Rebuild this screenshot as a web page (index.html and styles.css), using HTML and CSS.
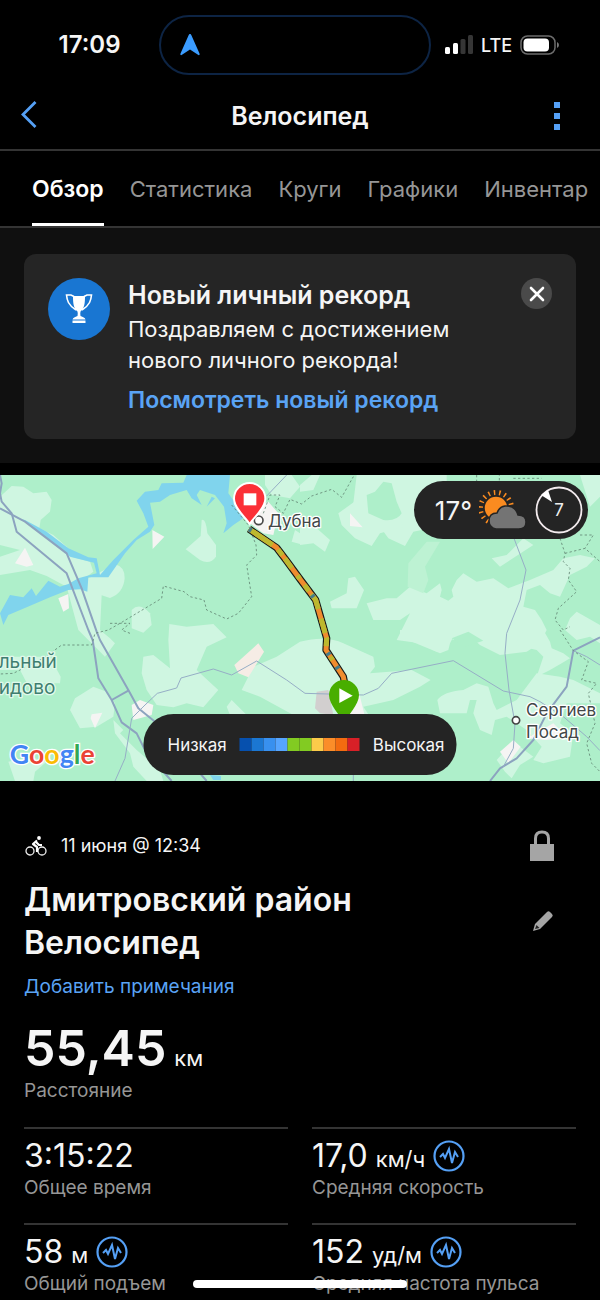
FILE: index.html
```html
<!DOCTYPE html>
<html lang="ru">
<head>
<meta charset="utf-8">
<meta name="viewport" content="width=device-width, initial-scale=1">
<title>Велосипед</title>
<link rel="stylesheet" href="styles.css">
</head>
<body>
<div class="status">
  <span class="clock">17:09</span>
  <div class="island">
    <svg width="20" height="22" viewBox="0 0 20 22"><path d="M10 0C10.800 0 11.200 .6 11.500 1.500L19.500 19.500C20 21 19 21.600 18 20.800L10 15.500L2 20.800C1 21.600 0 21 .5 19.500L8.500 1.500C8.800 .6 9.200 0 10 0Z" fill="#3b9cff"/></svg>
  </div>
  <div class="signals">
    <svg width="28" height="20" viewBox="0 0 28 20"><g fill="#fff"><rect y="12" width="5" height="7" rx="1.500"/><rect x="8" y="8" width="5" height="11" rx="1.500"/></g><g fill="#363636"><rect x="15.500" y="4" width="5" height="15" rx="1.500"/><rect x="23" y="0" width="5" height="19" rx="1.500"/></g></svg>
    <span class="network">LTE</span>
    <svg width="40" height="20" viewBox="0 0 40 20"><rect x="1" y="1" width="34" height="18" rx="6.500" fill="none" stroke="#6c6c6c" stroke-width="1.500"/><rect x="3.500" y="3.500" width="25.500" height="13" rx="4" fill="#fff"/><path d="M37 7Q39 8 39 10T37 13Z" fill="#777"/></svg>
  </div>
</div>

<header class="header">
  <button class="icon-button" aria-label="Назад"><svg width="18" height="30" viewBox="0 0 18 30"><path d="M15.500 1L3 13.500L15.500 26" fill="none" stroke="#55a0f5" stroke-width="2.800"/></svg></button>
  <h1 class="header-title">Велосипед</h1>
  <button class="icon-button icon-button-end" aria-label="Меню"><svg width="6" height="28" viewBox="0 0 6 28" fill="#55a0f5"><path d="M0 0h6v6H0zM0 11h6v6H0zM0 22h6v6H0z"/></svg></button>
</header>

<nav class="tabs">
  <a class="tab tab-active" href="#overview">Обзор</a>
  <a class="tab" href="#stats">Статистика</a>
  <a class="tab" href="#laps">Круги</a>
  <a class="tab" href="#charts">Графики</a>
  <a class="tab" href="#gear">Инвентар</a>
</nav>

<section class="notice">
  <div class="card">
    <div class="badge"><svg width="32" height="34" viewBox="0 0 32 34"><g fill="none" stroke="#fff" stroke-width="1.600"><path d="M11 4.500L8 3H3.500C4 8 5 13 13 18M21 4.500L24 3h4.500C28 8 27 13 19 18"/></g><path d="M10 4H22C22 11 21.500 16.500 17.500 19.500Q17 21 17.500 24C20 25 22 25.500 22.500 27.500H9.500C10 25.500 12 25 14.500 24Q15 21 14.500 19.500C10.500 16.500 10 11 10 4Z" fill="#fff"/><path d="M9.500 28.500h13v2.500h-13z" fill="#fff"/></svg></div>
    <div class="card-body">
      <h2 class="card-title">Новый личный рекорд</h2>
      <p class="card-text">Поздравляем с достижением нового личного рекорда!</p>
      <a class="card-link" href="#record">Посмотреть новый рекорд</a>
    </div>
    <button class="close" aria-label="Закрыть"><svg width="16" height="16" viewBox="0 0 16 16"><path d="M2 2L14 14M14 2L2 14" stroke="#fff" stroke-width="2.600" stroke-linecap="round"/></svg></button>
  </div>
</section>

<section class="map">
  <svg class="map-art" viewBox="0 15 1800 918" preserveAspectRatio="xMidYMid slice">
    <rect y="15" width="1800" height="918" fill="#aeefca"/>
    <g fill="#cff6e1">
      <path d="M0 80L35 48L70 50L100 70L140 65L155 90L150 125L122 150L118 175L160 195L200 230L215 260L270 275L280 305L220 350L190 345L140 318L90 300L0 315V260L60 240L0 225Z"/>
      <path d="M605 150Q618 145 622 190L648 225V260Q630 285 600 270L557 238L602 198Z"/>
      <path d="M272 322L345 283Q375 290 374 325Q370 370 330 384L305 376L300 480L330 505L345 520L315 560L235 480L200 350Z"/>
      <path d="M395 420Q420 395 450 430L455 465L430 488L395 475Z"/>
      <path d="M508 462L560 470L640 462L680 502L620 530L590 600L655 660L610 712L560 700L520 712L470 705L440 660L425 610L430 560L460 555L510 595L505 510Z"/>
      <path d="M795 15H875L900 50L870 85L815 75L795 45ZM885 180L900 190V222L875 215Z"/>
      <path d="M0 560L150 560L182 620L180 640L80 638L60 600L0 600ZM210 720L225 685L280 650L320 665L345 700L340 740L290 770L240 775Z"/>
      <path d="M25 875L90 860L140 875L105 905L100 933H45ZM340 750L370 780L360 790L410 840L480 900L490 933H440L400 890L390 850L345 790Z"/>
      <path d="M725 660L760 590L830 560L900 515Q980 495 1030 520L1120 560L1125 590L1110 610L1235 600L1292 630L1260 650L1180 690L1090 710L1110 740H890L780 680ZM680 710L695 690L740 735H690Z"/>
      <path d="M1070 15L1060 100L1115 135L1165 205L1215 228L1240 185L1290 175L1340 170L1340 15ZM900 45L935 15H960L940 60L900 65Z"/>
      <path d="M1070 90L1015 130L1025 165L1065 205L1115 228L1140 190L1210 170L1190 120Z"/>
      <path d="M900 165L950 175L990 210L975 245L940 220L900 225Z"/>
      <path d="M1590 330L1660 300L1690 265L1740 255L1785 265L1760 290L1710 315L1680 380L1650 370L1620 345L1580 360L1570 410L1605 420L1625 450L1640 480L1620 520L1580 545L1500 555L1440 525L1400 490L1360 510L1325 480L1300 495L1345 520L1310 545L1260 520L1190 510L1230 430L1200 450L1120 450L1100 400L1160 385L1190 385L1230 350L1280 370L1320 340L1325 360L1320 380L1345 392L1360 380L1355 360L1370 330L1390 310L1430 335L1480 325L1525 355Z"/>
      <path d="M990 395L1040 370L1045 325L1065 320L1092 360L1070 415L995 415ZM1475 265L1520 255L1570 205L1600 225L1500 290ZM1695 480L1710 445L1730 425L1800 465V520L1770 500L1730 510Z"/>
      <path d="M1200 480H1370L1350 520L1345 540L1320 550L1200 500ZM1570 480H1630L1650 515L1655 535L1690 550L1710 565L1685 580L1650 600L1610 620L1630 560L1610 540L1545 525Z"/>
      <path d="M1312 690Q1330 665 1390 660L1430 640L1465 650L1480 700L1490 720L1550 690L1610 610L1680 620L1720 630L1800 670V700L1700 700L1680 760L1720 790L1710 860L1630 880L1600 870L1625 830L1580 780L1520 740L1485 750L1475 795L1440 780L1420 730L1430 690L1410 690L1400 730L1320 730ZM1490 870L1540 815L1600 860L1560 885L1535 925L1515 905Z"/>
      <path d="M1740 15H1800V80L1770 110Z"/>
    </g>
    <path d="M1100 75L1125 65L1150 35L1175 40L1190 95L1205 130Q1190 155 1150 150L1105 130Z" fill="#aeefca"/>
    <path d="M1223 350L1225 280L1280 215H1320L1275 290L1285 330L1270 370Z" fill="#bdf2d3"/>
    <path d="M1355 505L1405 485L1450 512L1395 530Z" fill="#aeefca"/>
    <g fill="#80d4ed">
      <path d="M410 92L435 65L475 60L485 40L550 38L560 15H690L685 70L710 105L730 145L700 165L670 190L680 160L672 110L645 75L600 60L590 75L605 105L575 85L560 60L510 75L480 95L450 98L463 165L450 185L410 210L375 250L325 322L265 322L262 365L240 358L205 360L150 382L80 412L25 435L10 465L0 430L30 375L70 382L95 355L108 378L145 332L180 350L205 342L235 325L290 310L282 278L210 260L120 190L65 148L75 150L140 185L205 235L265 262L290 265L300 315L340 270L400 210L445 170L430 130Z"/>
      <path d="M635 80L645 85L620 110ZM630 915L663 918V930H640Z"/>
    </g>
    <g fill="#f5f4f3">
      <path d="M457 180L493 200L458 237ZM45 280L75 233L100 285L80 290ZM175 385L205 372L207 415L190 425ZM1050 130L1088 172L1050 168ZM275 733L307 728L285 775L272 745ZM1500 845L1540 810L1562 830L1525 880ZM1580 805L1660 760L1700 800L1640 810ZM395 705L420 690L460 705L455 735L400 750ZM770 110L805 95L835 130L820 195L790 190L750 160Z"/>
      <path d="M1020 730V650L1075 660L1095 740Z"/>
    </g>
    <path d="M703 585L775 520L792 545L745 622L715 610Z" fill="#f6ece5"/>
    <path d="M945 715L950 665L985 660L1000 735L960 730Z" fill="#d2cfcf"/>
    <g fill="none" stroke="#8ca3bf" stroke-width="6" stroke-linejoin="round">
      <path d="M0 15L5 40L0 70L5 95L35 130L50 185L200 310L265 480L278 510L295 625L335 690L365 757L410 790L440 850L515 933"/>
      <path d="M0 115L75 155L200 250L245 355L290 485L300 510L385 660L415 715L465 755L620 933"/>
      <path d="M335 690L385 662"/><path d="M1800 502L1720 542L1700 650L1640 730L1600 810L1550 865L1500 895L1470 933"/>
    </g>
    <g fill="none" stroke="#96aec6" stroke-width="3">
      <path d="M345 933L375 865L395 745L435 705L472 670L530 654L543 624L640 597L695 615L770 573L860 630L915 670L1090 675L1135 655L1175 610L1360 572L1510 663L1590 680L1620 695L1690 740L1760 800L1800 842"/>
      <path d="M1542 205L1578 300L1560 390L1520 490L1515 550L1527 660L1545 760L1540 835L1510 890M800 78L860 15M1720 542L1760 560L1800 585M1060 933V915"/>
    </g>
    <g fill="none" stroke="#638574" stroke-width="2.500" stroke-dasharray="7 7">
      <path d="M695 105L745 165L768 225L770 255L740 285L755 380L715 430L680 447L620 420L612 390L570 380L552 365L490 348L485 385L360 460L325 480L285 490L275 525H185L130 565L40 610L0 612M330 460L390 460L365 480L390 490"/>
      <path d="M790 130L810 75L840 75L825 110L850 130L870 88L905 102L935 78L995 58L1025 82L1060 20"/>
      <path d="M1430 15V45H1498V15M1540 25H1625M1680 205L1695 250L1690 275L1710 295L1705 330L1730 365L1675 415L1665 450L1690 480L1710 470M1695 250L1755 235L1800 275M1740 195L1780 195L1755 235"/>
      <path d="M1680 480L1720 542L1765 575L1745 630L1790 640L1765 670L1785 760L1760 820L1775 880L1800 905"/>
    </g>
    <path d="M747 177L830 233L858 270L902 330L947 390L980 505L978 540L1030 620L1037 655" fill="none" stroke="#171b19" stroke-width="22" stroke-linejoin="round"/>
    <path d="M747 177L830 233L858 270L902 330L947 390L980 505L978 540L1030 620L1037 655" fill="none" stroke="#f08c2e" stroke-width="15" stroke-linejoin="round"/>
    <path d="M747 177L830 233L858 270L902 330L947 390L980 505L978 540L1030 620L1037 655" fill="none" stroke="#bdb82f" stroke-width="15" stroke-dasharray="85 22 22 12 35 28 12 24 22 12 50 30 45 14 26 36 12 300"/>
    <path d="M747 177L830 233L858 270L902 330L947 390L980 505L978 540L1030 620L1037 655" fill="none" stroke="#477c88" stroke-width="15" stroke-dasharray="9 268 9 174 9 40 9 500"/>
    <circle cx="776" cy="151" r="13" fill="#fff" stroke="#494949" stroke-width="5"/>
    <path d="M749 162C735 140 702 115 702 86A47 47 0 1 1 796 86C796 115 763 140 749 162Z" fill="#fb3037" stroke="#fff" stroke-width="6"/>
    <path d="M731 70h38v36h-38z" fill="#fff"/>
    <path d="M1032 762C1022 735 987 705 987 675A45 45 0 1 1 1077 675C1077 705 1042 735 1032 762Z" fill="#48ae00"/><path d="M1018 655L1058 677L1018 699Z" fill="#fff"/>
    <circle cx="1548" cy="751" r="11" fill="#fff" stroke="#444" stroke-width="5"/>
    <g class="map-label">
      <text x="804" y="170">Дубна</text>
      <text x="1578" y="739">Сергиев</text><text x="1578" y="804">Посад</text>
    </g>
    <g class="map-label map-label-park"><text x="-4" y="594">льный</text><text x="-4" y="672">идово</text></g>
    <text class="map-brand" x="29" y="882"><tspan fill="#4285f4">G</tspan><tspan fill="#ea4335">o</tspan><tspan fill="#fbbc04">o</tspan><tspan fill="#4285f4">g</tspan><tspan fill="#34a853">l</tspan><tspan fill="#ea4335">e</tspan></text>
  </svg>
  <div class="weather">
    <span class="temperature">17°</span>
    <svg width="48" height="42" viewBox="0 0 48 42"><circle cx="17" cy="19" r="15.500" fill="none" stroke="#fa8b20" stroke-width="5" stroke-dasharray="1.500 3.910"/><circle cx="17" cy="19" r="12" fill="#fa8b20" stroke="#242424" stroke-width="1.500"/><path d="M17 40A8 8 0 0 1 10 32Q10 24 18 24Q20 18 26 17Q36 16 39 26Q47 26 47 33Q47 40 40 40Z" fill="#747474" stroke="#242424" stroke-width="1.500"/></svg>
    <svg width="50" height="50" viewBox="0 0 50 50"><circle cx="25" cy="25" r="22.500" fill="none" stroke="#f3ebee" stroke-width="1.800"/><path d="M7 10L14 5L18 17Z" fill="#fff"/><text class="wind" x="25" y="31" text-anchor="middle">7</text></svg>
  </div>
  <div class="legend">
    <span>Низкая</span>
    <div class="scale"><i class="s1"></i><i class="s2"></i><i class="s3"></i><i class="s4"></i><i class="s5"></i><i class="s5"></i><i class="s6"></i><i class="s7"></i><i class="s8"></i><i class="s9"></i></div>
    <span>Высокая</span>
  </div>
</section>

<main class="summary" id="overview">
  <div class="meta">
    <svg width="22" height="22" viewBox="0 0 22 22"><g fill="none" stroke="#eee" stroke-width="1.300"><circle cx="5" cy="16" r="4"/><circle cx="17" cy="16" r="4"/></g><circle cx="14" cy="3" r="1.900" fill="#fff"/><path d="M12 5.500L8 9L12 12V17M11 7L14 10H17" fill="none" stroke="#fff" stroke-width="2.200" stroke-linejoin="round"/></svg>
    <time class="date">11 июня @ 12:34</time>
    <svg class="lock" width="26" height="32" viewBox="0 0 26 32"><path d="M1 14h24v17H1z" fill="#a5a5a5"/><path d="M6.500 15V8.500Q6.500 2 13 2T19.500 8.500V15" fill="none" stroke="#a5a5a5" stroke-width="3"/></svg>
  </div>
  <div class="title-row">
    <h2 class="title">Дмитровский район Велосипед</h2>
    <button class="edit" aria-label="Изменить название"><svg width="24" height="24" viewBox="0 0 24 24"><path d="M2 22L4 15L16 3Q17.500 1.500 19 3L21 5Q22.500 6.500 21 8L9 20Z" fill="#a5a5a5"/><path d="M4 20L5.500 16L8.500 19Z" fill="#222"/></svg></button>
  </div>
  <a class="notes" href="#notes">Добавить примечания</a>
  <div class="distance">
    <div class="distance-line"><span class="distance-value">55,45</span><span class="unit">км</span></div>
    <div class="label">Расстояние</div>
  </div>
  <div class="grid">
    <div class="stat"><div class="reading"><span class="value">3:15:22</span></div><div class="label">Общее время</div></div>
    <div class="stat"><div class="reading"><span class="value">17,0</span><span class="unit">км/ч</span><button class="chart" aria-label="График скорости"><svg width="32" height="32" viewBox="0 0 32 32"><g fill="none" stroke="#55a0f5"><circle cx="16" cy="16" r="14.500" stroke-width="2.200"/><path d="M7 17L10 14L12 18L16 9L19 23L22 12L25 17" stroke-width="2"/></g></svg></button></div><div class="label">Средняя скорость</div></div>
    <div class="stat"><div class="reading"><span class="value">58</span><span class="unit">м</span><button class="chart" aria-label="График высоты"><svg width="32" height="32" viewBox="0 0 32 32"><g fill="none" stroke="#55a0f5"><circle cx="16" cy="16" r="14.500" stroke-width="2.200"/><path d="M7 17L10 14L12 18L16 9L19 23L22 12L25 17" stroke-width="2"/></g></svg></button></div><div class="label">Общий подъем</div></div>
    <div class="stat"><div class="reading"><span class="value">152</span><span class="unit">уд/м</span><button class="chart" aria-label="График пульса"><svg width="32" height="32" viewBox="0 0 32 32"><g fill="none" stroke="#55a0f5"><circle cx="16" cy="16" r="14.500" stroke-width="2.200"/><path d="M7 17L10 14L12 18L16 9L19 23L22 12L25 17" stroke-width="2"/></g></svg></button></div><div class="label">Средняя частота пульса</div></div>
  </div>
</main>
<div class="home-indicator"></div>
</body>
</html>
```

FILE: styles.css
```css
* { box-sizing: border-box; }
body { margin: 0; background: #000; color: #f5f5f5; font-family: Inter, "Liberation Sans", sans-serif; }
h1, h2, p { margin: 0; }
a { text-decoration: none; }
button { padding: 0; border: 0; background: none; color: inherit; }
svg { display: block; flex: none; }

.status { display: grid; grid-template-columns: 1fr 272px 1fr; align-items: center; height: 82px; padding: 8px 10px 0 0; }
.clock { padding-left: 20px; text-align: center; font-size: 24px; font-weight: 600; line-height: 30px; }
.island { display: flex; align-items: center; height: 60px; padding-left: 19px; border: 2px solid #0d2444; border-radius: 30px; }
.signals { display: flex; align-items: center; gap: 8px; padding-left: 14px; }
.network { font-size: 18px; font-weight: 500; }

.header { display: grid; grid-template-columns: 64px 1fr 64px; align-items: center; height: 69px; border-bottom: 2px solid #343434; }
.header-title { text-align: center; font-size: 25px; font-weight: 600; line-height: 32px; }
.icon-button { display: flex; align-items: center; height: 44px; padding-left: 20px; }
.icon-button-end { justify-content: flex-end; padding: 0 40px 0 0; }

.tabs { display: flex; gap: 26px; height: 77px; padding-left: 32px; border-bottom: 2px solid #343434; overflow: hidden; }
.tab { flex: none; padding-top: 23px; color: #969696; font-size: 22px; line-height: 30px; }
.tab-active { border-bottom: 3px solid #fff; color: #fff; font-size: 23px; font-weight: 600; }

.notice { padding: 26px 24px 24px; background: #101010; }
.card { display: flex; align-items: flex-start; padding: 24px; border-radius: 12px; background: #252525; }
.badge { display: flex; align-items: center; justify-content: center; flex: none; width: 62px; height: 62px; border-radius: 50%; background: #1976d2; }
.card-body { flex: 1; padding-left: 18px; }
.card-title { font-size: 25px; font-weight: 600; line-height: 34px; }
.card-text { max-width: 350px; padding: 2px 0 9px; font-size: 22px; line-height: 31px; }
.card-link { display: block; color: #5aa3f4; font-size: 23px; font-weight: 600; line-height: 30px; }
.close { display: flex; align-items: center; justify-content: center; flex: none; width: 31px; height: 31px; border-radius: 50%; background: #4a4a4a; }

.map { position: relative; margin-top: 12px; overflow: hidden; }
.map-art { width: 100%; aspect-ratio: 600 / 306; }
.map-label { fill: #424747; stroke: #fff; stroke-width: 8px; paint-order: stroke; stroke-linejoin: round; font-size: 51px; }
.map-label-park { fill: #3f7e70; stroke: #e0f9eb; font-size: 57px; }
.map-brand { stroke: #fff; stroke-width: 8px; paint-order: stroke; font-family: Lato, sans-serif; font-size: 80px; font-weight: 700; }
.weather { position: absolute; top: 6px; right: 12px; display: flex; align-items: center; gap: 7px; height: 58px; padding: 0 4px 0 21px; border-radius: 29px; background: #242424; }
.temperature { font-size: 26px; }
.wind { fill: #eee; font-size: 17px; }
.legend { position: absolute; bottom: 6px; left: 50%; transform: translateX(-50%); display: flex; align-items: center; gap: 13px; height: 61px; padding: 0 12px 0 24px; border-radius: 30px; background: #242424; font-size: 17px; white-space: nowrap; }
.scale { display: flex; height: 13px; }
.scale i { width: 12px; }
.s1 { background: #0650ae; }
.s2 { background: #1b77d2; }
.s3 { background: #3890ef; }
.s4 { background: #56a5ff; }
.s5 { background: #82cb22; }
.s6 { background: #fccb4a; }
.s7 { background: #fb8d29; }
.s8 { background: #f36b10; }
.s9 { background: #d82027; }

.summary { padding: 49px 24px 0; }
.meta { display: flex; align-items: center; gap: 14px; padding: 0 21px 0 1px; }
.date { font-size: 18px; line-height: 32px; }
.lock { margin-left: auto; }
.title-row { display: flex; align-items: center; justify-content: space-between; padding: 16px 21px 9px 0; }
.title { max-width: 360px; font-size: 32px; font-weight: 600; line-height: 43px; }
.edit { display: flex; }
.notes { display: block; color: #5aa3f4; font-size: 19px; line-height: 28px; }
.distance { padding: 17px 0 23px; }
.distance-line { display: flex; align-items: baseline; gap: 8px; height: 60px; line-height: 60px; }
.distance-value { font-size: 50px; font-weight: 600; }
.unit { font-size: 22px; }
.label { color: #969696; font-size: 19px; line-height: 26px; white-space: nowrap; }
.grid { display: grid; grid-template-columns: 1fr 1fr; column-gap: 24px; }
.stat { height: 96px; padding-top: 8px; border-top: 2px solid #343434; }
.reading { display: flex; align-items: baseline; gap: 8px; height: 38px; line-height: 38px; }
.value { font-size: 32px; }
.chart { display: flex; align-self: center; }
.home-indicator { position: fixed; bottom: 12px; left: 50%; width: 214px; height: 8px; border-radius: 4px; background: #fff; transform: translateX(-50%); }
```
